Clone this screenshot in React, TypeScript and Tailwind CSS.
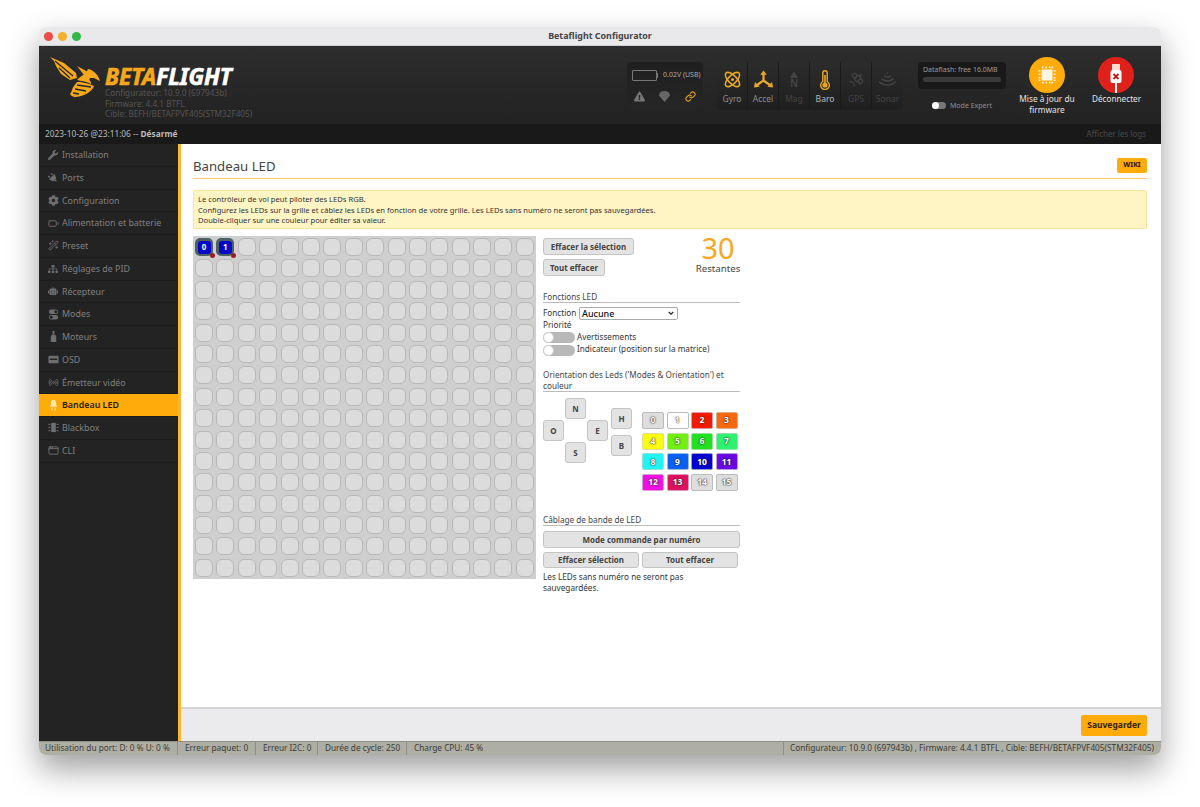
import { Atom, Battery, Link, Radio, Satellite, Wifi, WandSparkles, AppWindow } from "lucide-react"
import { FaCog, FaExclamationTriangle, FaPlug, FaRobot, FaSitemap, FaWrench } from "react-icons/fa"

const sans = "[font-family:'Open_Sans','Noto_Sans',sans-serif]"
const arial = "[font-family:'Liberation_Sans',Arial,sans-serif]"

function ModesIcon() {
  return (
    <svg viewBox="0 0 12 12" className="h-[11px] w-[11px]" fill="currentColor">
      <rect x="1" y="0.5" width="10" height="5" rx="2.5" />
      <rect x="1" y="6.5" width="10" height="5" rx="2.5" />
      <circle cx="8.5" cy="3" r="1.6" fill="#232323" />
      <circle cx="3.5" cy="9" r="1.6" fill="#232323" />
    </svg>
  )
}

function MotorIcon() {
  return (
    <svg viewBox="0 0 12 12" className="h-[11px] w-[11px]" fill="currentColor">
      <rect x="5" y="0" width="2" height="4" />
      <path d="M4 4h4l1 2.5v5.5H3V6.5z" />
    </svg>
  )
}

function OsdIcon() {
  return (
    <svg viewBox="0 0 12 12" className="h-[11px] w-[11px]" fill="currentColor">
      <rect x="0.5" y="2" width="11" height="8" rx="1" />
      <rect x="2" y="5" width="8" height="1.5" fill="#232323" />
    </svg>
  )
}

function BulbIcon() {
  return (
    <svg viewBox="0 0 12 14" className="h-[12px] w-[11px]" fill="#ffe9a8">
      <path d="M3 7V4a3 3 0 0 1 6 0v3l1 1v1H2V8z" />
      <rect x="3.5" y="10" width="1.2" height="3.5" />
      <rect x="7.3" y="10" width="1.2" height="3.5" />
    </svg>
  )
}

function ChipIcon() {
  return (
    <svg viewBox="0 0 12 12" className="h-[11px] w-[11px]" fill="currentColor">
      <rect x="3.5" y="1" width="5" height="10" />
      <rect x="0.5" y="2" width="2" height="1.2" />
      <rect x="0.5" y="5.4" width="2" height="1.2" />
      <rect x="0.5" y="8.8" width="2" height="1.2" />
      <rect x="9.5" y="2" width="2" height="1.2" />
      <rect x="9.5" y="5.4" width="2" height="1.2" />
      <rect x="9.5" y="8.8" width="2" height="1.2" />
    </svg>
  )
}

const menu = [
  { name: "Installation", icon: <FaWrench size={10} /> },
  { name: "Ports", icon: <FaPlug size={10} className="-rotate-45" /> },
  { name: "Configuration", icon: <FaCog size={11} /> },
  { name: "Alimentation et batterie", icon: <Battery size={11} /> },
  { name: "Preset", icon: <WandSparkles size={11} /> },
  { name: "Réglages de PID", icon: <FaSitemap size={10} /> },
  { name: "Récepteur", icon: <FaRobot size={10} /> },
  { name: "Modes", icon: <ModesIcon /> },
  { name: "Moteurs", icon: <MotorIcon /> },
  { name: "OSD", icon: <OsdIcon /> },
  { name: "Émetteur vidéo", icon: <Radio size={11} /> },
  { name: "Bandeau LED", icon: <BulbIcon />, active: true },
  { name: "Blackbox", icon: <ChipIcon /> },
  { name: "CLI", icon: <AppWindow size={11} /> },
]

const colours = [
  { n: 0, c: "bg-[#dedede] border-[#bbb]" },
  { n: 1, c: "bg-white border-[#bbb]" },
  { n: 2, c: "bg-[#f01a00] border-[#d9a]" },
  { n: 3, c: "bg-[#f56a10] border-[#da8]" },
  { n: 4, c: "bg-[#fbfb10] border-[#dd9]" },
  { n: 5, c: "bg-[#70f010] border-[#bd9]" },
  { n: 6, c: "bg-[#20e020] border-[#9d9]" },
  { n: 7, c: "bg-[#30f070] border-[#9da]" },
  { n: 8, c: "bg-[#20f5f5] border-[#9dd]" },
  { n: 9, c: "bg-[#0a60f0] border-[#9bd]" },
  { n: 10, c: "bg-[#0000d0] border-[#99c]" },
  { n: 11, c: "bg-[#6a08e0] border-[#b9d]" },
  { n: 12, c: "bg-[#f010e0] border-[#d9d]" },
  { n: 13, c: "bg-[#e01060] border-[#d9b]" },
  { n: 14, c: "bg-[#dedede] border-[#bbb]" },
  { n: 15, c: "bg-[#dedede] border-[#bbb]" },
]

const dirs = [
  { t: "N", c: "left-[565px] top-[398px] h-[21px]" },
  { t: "O", c: "left-[543px] top-[420px] h-[21px]" },
  { t: "E", c: "left-[587px] top-[420px] h-[21px]" },
  { t: "S", c: "left-[565px] top-[442px] h-[21px]" },
  { t: "H", c: "left-[611px] top-[408px] h-[21px]" },
  { t: "B", c: "left-[611px] top-[435px] h-[21px]" },
]

const sensors = [
  { name: "Gyro", on: true, icon: <Atom size={19} strokeWidth={2} /> },
  {
    name: "Accel",
    on: true,
    icon: (
      <svg viewBox="0 0 20 20" className="h-[19px] w-[21px]" fill="none" stroke="currentColor" strokeWidth="2.4">
        <path d="M10 11V3M10 11l-7 5M10 11l7 5" />
        <path d="M6.5 5l3.5-4.500 3.5 4.500z M1 12.5l-1 6 6-1z M19 12.5l1 6-6-1z" fill="currentColor" stroke="none" />
      </svg>
    ),
  },
  {
    name: "Mag",
    on: false,
    icon: (
      <div className="flex flex-col items-center text-[#444]">
        <div className="h-0 w-0 border-x-[4px] border-b-[7px] border-x-transparent border-b-[#444]" />
        <span className={`${arial} text-[10px] font-bold leading-[11px]`}>N</span>
      </div>
    ),
  },
  {
    name: "Baro",
    on: true,
    bright: true,
    icon: (
      <svg viewBox="0 0 12 20" className="h-[20px] w-[12px]" fill="none" stroke="currentColor" strokeWidth="1.4">
        <path d="M3.8 11.5V3a2.2 2.2 0 0 1 4.400 0v8.500a4.300 4.300 0 1 1-4.400 0z" />
        <circle cx="6" cy="15" r="2.6" fill="currentColor" stroke="none" />
        <rect x="5.2" y="5" width="1.6" height="9" fill="currentColor" stroke="none" />
      </svg>
    ),
  },
  { name: "GPS", on: false, icon: <Satellite size={17} strokeWidth={1.8} /> },
  { name: "Sonar", on: false, icon: <Wifi size={19} strokeWidth={2} className="rotate-180" /> },
]

function GreyBtn({ className, children }: { className: string; children: React.ReactNode }) {
  return (
    <div
      className={`absolute flex items-center justify-center rounded-[3px] border border-[#c4c4c4] bg-[#e3e3e3] ${arial} text-[8px] font-bold text-[#444] ${className}`}
    >
      {children}
    </div>
  )
}

function Toggle({ top }: { top: string }) {
  return (
    <div className={`absolute left-[543px] h-[11px] w-[32px] rounded-full bg-[#b8b8b8] ${top}`}>
      <div className="h-[11px] w-[11px] rounded-full border border-[#ccc] bg-white" />
    </div>
  )
}

function Bee() {
  return (
    <svg viewBox="0 0 50 42" className="absolute left-[50px] top-[56px] h-[42px] w-[50px]" fill="#f5a81c">
      <path d="M0 1L14 7 26 17 27 22 20 24 11 18 6 10 4 5z" />
      <path d="M5 5L23 20M9 12L20 22" stroke="#262626" strokeWidth="1.2" fill="none" />
      <path d="M27 10L38 16 34 19z" />
      <path d="M38 13C44 14 48 19 50 25L44 22 40 22C38 24 42 26 41 28 36 25 30 25 27 24 30 20 36 19 38 13z" />
      <path d="M27 26C33 26 40 28 44 30 42 36 34 40 26 41 22 41 21 39 20 38 22 36 22 32 24 30z" />
      <path d="M27 29L41 31M25 33L36 35M23 37L29 38" stroke="#262626" strokeWidth="1.3" fill="none" />
    </svg>
  )
}

export default function App() {
  return (
    <div className={`relative h-[807px] w-[1200px] overflow-hidden bg-white ${sans}`}>
      <div className="absolute left-[39px] top-[27px] flex h-[728px] w-[1122px] flex-col overflow-hidden rounded-[7px] shadow-[0_14px_32px_rgba(0,0,0,0.38)]">
        {/* title bar */}
        <div className="relative flex h-[19px] shrink-0 items-center justify-center border-b border-[#cfcfcf] bg-[#e9e9eb]">
          <div className="absolute left-[5px] top-[5px] flex gap-[5px]">
            <div className="h-[9px] w-[9px] rounded-full bg-[#ef4b45]" />
            <div className="h-[9px] w-[9px] rounded-full bg-[#f2b02f]" />
            <div className="h-[9px] w-[9px] rounded-full bg-[#35b84a]" />
          </div>
          <span className={`${arial} text-[8.9px] font-bold text-[#444]`}>Betaflight Configurator</span>
        </div>

        {/* header */}
        <div className="h-[78px] shrink-0 bg-gradient-to-b from-[#2d2d2d] to-[#222222]" />

        {/* log bar */}
        <div className="flex h-[20px] shrink-0 items-center justify-between bg-[#191919] pl-[6px] pr-[15px] text-[8.3px]">
          <span className="text-[#bbbbbb]">
            2023-10-26 @23:11:06 -- <b>Désarmé</b>
          </span>
          <span className="text-[8px] text-[#4a4a4a]">Afficher les logs</span>
        </div>

        <div className="flex min-h-0 flex-1">
          {/* sidebar */}
          <div className="w-[139px] shrink-0 bg-[#232323]">
            {menu.map((m) => (
              <div
                key={m.name}
                className={`flex h-[22.75px] items-center border-b border-[#1c1c1c] pl-[8px] text-[8.9px] ${
                  m.active ? "bg-[#ffab0c] font-semibold text-[#2a1c00]" : "text-[#808080]"
                }`}
              >
                <span className={`mr-[3px] flex w-[12px] justify-center ${m.active ? "" : "text-[#6e6e6e]"}`}>{m.icon}</span>
                {m.name}
              </div>
            ))}
          </div>
          <div className="w-[3px] shrink-0 bg-[#ffb52e]" />

          {/* content */}
          <div className="flex min-w-0 flex-1 flex-col">
            <div className="flex-1 bg-white" />
            <div className="flex h-[34px] shrink-0 items-center justify-end border-t-2 border-[#d4d4d6] bg-[#ebebee] pr-[14px]">
              <div className="flex h-[21px] w-[66px] items-center justify-center rounded-[2px] bg-[#ffab0c] text-[8.5px] font-bold text-[#332200]">
                Sauvegarder
              </div>
            </div>
          </div>
        </div>

        {/* status bar */}
        <div className="flex h-[14px] shrink-0 items-center justify-between border-t border-[#8e8e86] bg-[#aeaea4] text-[8.25px] text-[#3c3c38]">
          <div className="flex h-full">
            <span className="w-[139px] border-r border-[#8e8e86] pl-[6px]">Utilisation du port: D: 0 % U: 0 %</span>
            <span className="w-[78px] border-r border-[#8e8e86] pl-[7px]">Erreur paquet: 0</span>
            <span className="w-[62px] border-r border-[#8e8e86] pl-[7px]">Erreur I2C: 0</span>
            <span className="w-[89px] border-r border-[#8e8e86] pl-[7px]">Durée de cycle: 250</span>
            <span className="pl-[7px]">Charge CPU: 45 %</span>
          </div>
          <span className="border-l border-[#8e8e86] pl-[6px] pr-[7px]">
            Configurateur: 10.9.0 (697943b) , Firmware: 4.4.1 BTFL , Cible: BEFH/BETAFPVF405(STM32F405)
          </span>
        </div>
      </div>

      {/* header contents, placed on page coordinates */}
      <Bee />
      <div className={`absolute left-[105px] top-[66px] ${arial} text-[22.5px] font-bold italic leading-[22px] [-webkit-text-stroke:0.7px]`}>
        <span className="text-[#f5a81c]">BETA</span>
        <span className="text-white">FLIGHT</span>
      </div>
      <div className="absolute left-[105px] top-[88px] text-[8.2px] leading-[10.5px] text-[#555555]">
        <div>Configurateur: 10.9.0 (697943b)</div>
        <div>Firmware: 4.4.1 BTFL</div>
        <div>Cible: BEFH/BETAFPVF405(STM32F405)</div>
      </div>

      {/* battery */}
      <div className="absolute left-[627px] top-[62px] h-[47px] w-[76px] rounded-[4px] bg-gradient-to-b from-[#1f1f1f] to-[#262626]">
        <div className="absolute left-[5px] top-[8px] h-[11px] w-[25px] rounded-[1px] border border-[#777]" />
        <div className="absolute left-[30px] top-[11px] h-[5px] w-[1px] bg-[#777]" />
        <span className="absolute left-[36px] top-[8px] whitespace-nowrap text-[7px] leading-[9px] text-[#aaa]">0.02V (USB)</span>
        <FaExclamationTriangle size={11} className="absolute left-[7px] top-[29px] text-[#777]" />
        <svg viewBox="0 0 12 12" className="absolute left-[32px] top-[29px] h-[11px] w-[11px]" fill="#666">
          <path d="M0 5a6 5 0 0 1 12 0L6 12z" />
        </svg>
        <Link size={11} strokeWidth={2.4} className="absolute left-[58px] top-[29px] text-[#e0a11c]" />
      </div>

      {/* sensors */}
      <div className="absolute left-[717px] top-[62px] flex h-[48px] w-[186px] overflow-hidden rounded-[4px] bg-gradient-to-b from-[#2c2c2c] to-[#1f1f1f]">
        {sensors.map((s) => (
          <div key={s.name} className="flex w-[31px] flex-col items-center border-r border-[#1a1a1a] last:border-r-0">
            <div className={`flex h-[31px] items-center justify-center pt-[4px] ${s.on ? "text-[#e8a827]" : "text-[#444444]"}`}>{s.icon}</div>
            <span className={`text-[8.5px] ${s.bright ? "text-[#bbbbbb]" : s.on ? "text-[#8f8f8f]" : "text-[#444444]"}`}>{s.name}</span>
          </div>
        ))}
      </div>

      {/* dataflash */}
      <div className="absolute left-[918px] top-[62px] h-[27px] w-[88px] rounded-[4px] bg-[#191919] px-[5px] pt-[2px]">
        <div className="whitespace-nowrap text-[7px] leading-[11px] text-[#9a9a9a]">Dataflash: free 16.0MB</div>
        <div className="mt-[2px] h-[5px] rounded-full bg-[#3a3a3a]" />
      </div>
      <div className="absolute left-[932px] top-[102px] h-[7px] w-[14px] rounded-full bg-[#777]">
        <div className="h-[7px] w-[7px] rounded-full bg-white" />
      </div>
      <span className="absolute left-[950px] top-[100px] text-[7px] leading-[11px] text-[#8f8f8f]">Mode Expert</span>

      {/* firmware */}
      <div className="absolute left-[1029px] top-[57px] flex h-[36px] w-[36px] items-center justify-center rounded-full bg-[#ffab0c]">
        <svg viewBox="0 0 20 20" className="h-[20px] w-[20px]" fill="#fff6e0">
          <rect x="4.5" y="4.5" width="11" height="11" rx="1" />
          {[5, 8.5, 12, 14.5].map((p) => (
            <g key={p}>
              <rect x={p} y="1.5" width="1.5" height="1.8" />
              <rect x={p} y="16.7" width="1.5" height="1.8" />
              <rect x="1.5" y={p} width="1.8" height="1.5" />
              <rect x="16.7" y={p} width="1.8" height="1.5" />
            </g>
          ))}
        </svg>
      </div>
      <div className="absolute left-[1007px] top-[93px] w-[80px] text-center text-[8.3px] leading-[11px] text-[#e4e4e4]">
        Mise à jour du firmware
      </div>

      {/* disconnect */}
      <div className="absolute left-[1098px] top-[57px] flex h-[36px] w-[36px] items-center justify-center overflow-hidden rounded-full bg-[#e0201a]">
        <svg viewBox="0 0 20 36" className="h-[36px] w-[20px]">
          <rect x="6" y="7" width="8" height="6" fill="#ffd9d6" />
          <rect x="4.5" y="13" width="11" height="13" rx="2" fill="#fff" />
          <rect x="9" y="26" width="2" height="10" fill="#fff" />
          <path d="M7.5 17l5 5M12.5 17l-5 5" stroke="#c01a14" strokeWidth="1.8" />
        </svg>
      </div>
      <span className="absolute left-[1092px] top-[93px] text-[8.2px] leading-[11px] text-[#e4e4e4]">Déconnecter</span>

      {/* tab content */}
      <span className="absolute left-[193px] top-[156px] text-[13.2px] leading-[20px] text-[#444444]">Bandeau LED</span>
      <div className="absolute left-[1117px] top-[158px] flex h-[15px] w-[30px] items-center justify-center rounded-[2px] bg-[#ffab0c] text-[7px] font-extrabold text-[#332200]">
        WIKI
      </div>
      <div className="absolute left-[193px] top-[178px] h-[1px] w-[954px] bg-[#ffc766]" />

      <div className="absolute left-[193px] top-[190px] h-[39px] w-[954px] rounded-[2px] border border-[#fbe39b] bg-[#fff5c4] px-[4px] py-[3px] text-[7.6px] leading-[10.6px] text-[#333333]">
        <div>Le contrôleur de vol peut piloter des LEDs RGB.</div>
        <div>Configurez les LEDs sur la grille et câblez les LEDs en fonction de votre grille. Les LEDs sans numéro ne seront pas sauvegardées.</div>
        <div>Double-cliquer sur une couleur pour éditer sa valeur.</div>
      </div>

      {/* LED grid */}
      <div className="absolute left-[193px] top-[236px] grid h-[343px] w-[343px] grid-cols-[repeat(16,18px)] auto-rows-[18px] gap-[3.4px] bg-[#cfcfcf] pl-[2px] pt-[2px]">
        {Array.from({ length: 256 }).map((_, i) =>
          i < 2 ? (
            <div key={i} className="relative flex items-center justify-center rounded-[5px] bg-[#4d6163] p-[2px]">
              <div className="flex h-[13px] w-[13px] items-center justify-center rounded-[3px] bg-[#0606c8] text-[8px] font-bold text-white">{i}</div>
              <div className="absolute -bottom-[2px] -right-[2px] h-[5px] w-[5px] rounded-full bg-[#9c1c2a]" />
            </div>
          ) : (
            <div key={i} className="rounded-[6px] border border-[#b8b8b8] bg-[#dcdcdc]" />
          ),
        )}
      </div>

      {/* right column */}
      <GreyBtn className="left-[543px] top-[238px] h-[17px] w-[91px]">Effacer la sélection</GreyBtn>
      <GreyBtn className="left-[543px] top-[259px] h-[17px] w-[62px]">Tout effacer</GreyBtn>
      <div className="absolute left-[678px] top-[234px] w-[80px] text-center text-[29px] leading-[28px] text-[#f7a823]">30</div>
      <div className="absolute left-[678px] top-[263px] w-[80px] text-center text-[9.7px] leading-[12px] text-[#444444]">Restantes</div>

      <span className="absolute left-[543px] top-[291px] text-[8.2px] leading-[12px] text-[#444444]">Fonctions LED</span>
      <div className="absolute left-[543px] top-[302px] h-[1px] w-[197px] bg-[#bbbbbb]" />
      <span className="absolute left-[543px] top-[307px] text-[8.2px] leading-[12px] text-[#333333]">Fonction</span>
      <div className={`absolute left-[579px] top-[307px] flex h-[13px] w-[99px] items-center justify-between rounded-[2px] border border-[#aaa] bg-white pl-[2px] pr-[3px] ${arial} text-[9px] font-medium text-[#111]`}>
        Aucune
        <svg viewBox="0 0 8 6" className="h-[5px] w-[6px]" fill="none" stroke="#222" strokeWidth="1.6">
          <path d="M1 1l3 3 3-3" />
        </svg>
      </div>
      <span className="absolute left-[543px] top-[319px] text-[8.2px] leading-[12px] text-[#333333]">Priorité</span>
      <Toggle top="top-[332px]" />
      <span className="absolute left-[577px] top-[331px] text-[8.2px] leading-[12px] text-[#333333]">Avertissements</span>
      <Toggle top="top-[345px]" />
      <span className="absolute left-[577px] top-[343px] text-[8.2px] leading-[12px] text-[#333333]">Indicateur (position sur la matrice)</span>

      <div className="absolute left-[543px] top-[369px] w-[197px] text-[8.2px] leading-[11px] text-[#444444]">
        Orientation des Leds ('Modes &amp; Orientation') et couleur
      </div>
      <div className="absolute left-[543px] top-[391px] h-[1px] w-[197px] bg-[#bbbbbb]" />

      {dirs.map((d) => (
        <GreyBtn key={d.t} className={`w-[21px] ${d.c}`}>
          {d.t}
        </GreyBtn>
      ))}

      <div className="absolute left-[642px] top-[412px] grid grid-cols-[repeat(4,22px)] auto-rows-[17px] gap-x-[2.5px] gap-y-[3.7px]">
        {colours.map((c) => (
          <div
            key={c.n}
            className={`flex items-center justify-center rounded-[2px] border ${c.c} ${arial} text-[8.5px] font-bold text-white [text-shadow:0_0_1.5px_#222,0_0_1.5px_#222]`}
          >
            {c.n}
          </div>
        ))}
      </div>

      <span className="absolute left-[543px] top-[514px] text-[8.2px] leading-[12px] text-[#444444]">Câblage de bande de LED</span>
      <div className="absolute left-[543px] top-[525px] h-[1px] w-[197px] bg-[#bbbbbb]" />
      <GreyBtn className="left-[543px] top-[531px] h-[17px] w-[197px]">Mode commande par numéro</GreyBtn>
      <GreyBtn className="left-[543px] top-[552px] h-[16px] w-[96px]">Effacer sélection</GreyBtn>
      <GreyBtn className="left-[642px] top-[552px] h-[16px] w-[96px]">Tout effacer</GreyBtn>
      <div className="absolute left-[543px] top-[571px] w-[170px] text-[8.2px] leading-[11px] text-[#333333]">
        Les LEDs sans numéro ne seront pas sauvegardées.
      </div>
    </div>
  )
}
